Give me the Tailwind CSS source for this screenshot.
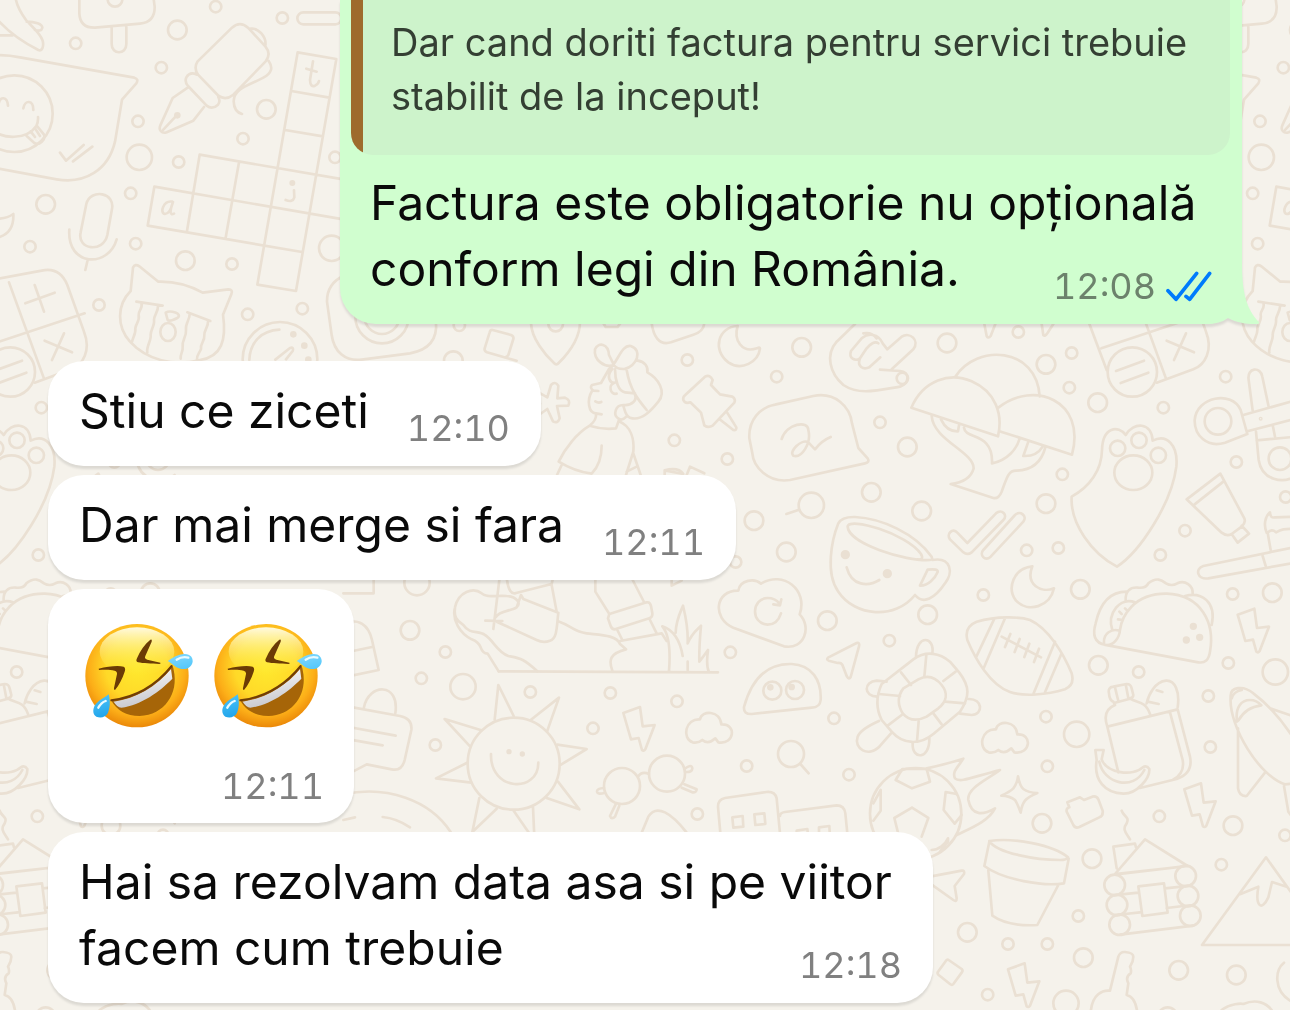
<!doctype html>
<html lang="ro">
  <head>
    <meta charset="UTF-8" />
    <meta name="viewport" content="width=device-width, initial-scale=1.0" />
    <title>Chat</title>
    <script src="https://cdn.jsdelivr.net/npm/@tailwindcss/browser@4"></script>
  </head>
  <body class="bg-[#f5f2eb] font-['Inter',sans-serif] text-[#0a0a0a]">
    <main class="relative isolate min-h-screen overflow-hidden">
      <!-- doodle wallpaper, repeats every 1122px -->
      <svg class="absolute top-0 left-0 -z-10 h-full w-full" aria-hidden="true" fill="none" stroke="#eae0d3" stroke-width="8" stroke-linecap="round" stroke-linejoin="round">
        <defs>
          <g id="tile">
            <g transform="scale(.33333)">
              <!-- bird, ice cream -->
              <path d="M-5 62C30 100 75 130 115 150C127 155 132 138 128 122C120 97 95 80 78 60C60 35 50 15 47-5M80 65C105 65 127 72 127 83C125 93 115 93 105 90M-5 106H38" />
              <path d="M238-10V40Q240 84 285 83L420 71Q465 67 464 20L460-10M335 82V132C335 165 379 165 379 132V80" />
              <circle cx="345" cy="-2" r="22" />
              <!-- speech bubble with face -->
              <path d="M-60 170Q0 160 60 172L403 233Q417 237 409 250L366 299L345 425C325 510 255 553 170 538L-20 503" />
              <circle cx="43" cy="341" r="115" />
              <path d="M-25 385C5 420 80 420 109 378Q115 366 114 351M-5 316C0 285 22 290 24 317M70 325C75 298 100 300 100 330M80 408L103 429C118 438 138 418 132 404L110 377M92 394L105 411M105 385L120 408M180 458L198 482L251 435M219 484L277 440" />
              <!-- fountain pen -->
              <path d="M593 184L696 83Q720 62 744 83L796 139Q815 162 797 184L700 284Q678 302 656 288L594 224Q580 204 593 184ZM590 224Q570 214 559 232Q553 245 564 258L620 317Q637 330 654 314Q662 303 655 291M563 263L518 294L481 376C475 390 485 402 500 397L580 362L612 321M490 389L530 346M752 86C775 83 800 110 796 137M806 183C820 203 815 220 790 233C745 257 702 265 701 304Q702 335 726 342" />
              <circle cx="532" cy="346" r="6" fill="#eae0d3" />
              <rect x="892" y="37" width="132" height="36" rx="18" />
              <!-- crossword -->
              <path d="M893 157L1009 177L888 873L772 854ZM874 273L988 293M855 390L969 409M599 464L1030 538M463 560L1030 658M443 677L906 756M599 464L561 693M463 560L443 677M717 487L677 713M939 184L930 240Q931 263 945 257Q955 252 957 243M919 206L950 215M882 571L883 592Q878 609 857 600M517 605C490 600 478 640 495 642Q510 642 519 606Q503 650 522 641" />
              <circle cx="877" cy="549" r="5" fill="#eae0d3" />
              <!-- microphone -->
              <path d="M259 612C270 565 350 575 335 632L322 705C310 760 230 750 242 697ZM208 689C200 800 325 805 350 718M263 780L256 810M-5 656Q22 655 40 642C42 685 20 705-5 712" />
              <!-- crying cat -->
              <path d="M392 873L399 803Q405 790 418 799L475 845Q545 843 608 878L685 868Q700 868 694 883L669 944C680 1020 665 1070 600 1080C520 1100 440 1080 390 1025C350 980 350 915 392 873Z" />
              <path d="M409 905L488 917M424 910C430 925 415 930 416 945C420 962 408 970 406 985C408 1000 400 1010 396 1025M474 918C475 935 462 945 462 960C465 975 452 990 452 1004C455 1020 438 1040 442 1058M562 937L631 963M569 941C570 960 555 970 558 990C560 1010 545 1020 548 1040C550 1055 540 1062 542 1076M624 963C626 980 612 990 613 1005C615 1025 600 1030 603 1047C598 1060 590 1065 591 1078M497 938C510 930 550 940 532 954C520 960 508 965 503 960Z" />
              <ellipse cx="504" cy="996" rx="23" ry="27" />
              <g>
                <circle cx="647" cy="20" r="17" /><circle cx="847" cy="54" r="17" /><circle cx="227" cy="130" r="17" /><circle cx="484" cy="203" r="17" /><circle cx="414" cy="364" r="17" /><circle cx="536" cy="486" r="17" /><circle cx="729" cy="416" r="17" /><circle cx="392" cy="580" r="17" /><circle cx="407" cy="731" r="17" /><circle cx="90" cy="740" r="17" /><circle cx="297" cy="915" r="17" /><circle cx="696" cy="792" r="17" /><circle cx="743" cy="943" r="17" /><circle cx="907" cy="926" r="17" /><circle cx="1005" cy="472" r="17" />
                <circle cx="532" cy="90" r="28" /><circle cx="799" cy="328" r="28" /><circle cx="137" cy="613" r="28" /><circle cx="556" cy="782" r="28" /><circle cx="418" cy="472" r="38" /><circle cx="995" cy="745" r="38" />
              </g>
            </g>
            <g transform="translate(230 315) scale(.33333)">
              <!-- compass, camera -->
              <circle cx="150" cy="133" r="112" />
              <path d="M148 44C95 47 60 80 58 135M136 134L180 99Q192 95 188 108L168 133" />
              <g fill="#eae0d3"><circle cx="190" cy="58" r="6" /><circle cx="223" cy="92" r="6" /><circle cx="235" cy="134" r="6" /></g>
              <path d="M345-120Q290-95 291-40L305 60C312 110 345 140 395 134L540 115Q625 100 618 20V-60" />
              <circle cx="456" cy="5" r="80" /><circle cx="456" cy="5" r="52" />
              <path d="M788 45L843 60Q852 64 850 72L835 120Q830 129 820 126L771 112Q762 108 764 100L779 52Q781 44 788 45ZM820 126L860 137" />
              <circle cx="688" cy="31" r="17" /><circle cx="670" cy="137" r="28" />
            </g>
            <g transform="translate(535 320) scale(.33333)">
              <!-- map pin -->
              <path d="M-12 10C-10 55 30 105 57 129Q64 137 71 129C105 95 135 50 135 5" />
              <circle cx="62" cy="12" r="22" />
              <path d="M205 10L212 21H248L256 10M350 10C355 45 370 78 408 67L475 44Q505 35 508 10" />
              <!-- girl with bow -->
              <path d="M236 135C210 145 175 120 180 88C190 65 220 70 222 105L236 133C255 105 265 75 287 78C325 90 305 140 268 147C250 148 240 140 236 135ZM236 135L222 147L198 189L171 195Q163 203 175 212L190 213M171 213C155 240 160 280 183 280L200 283M181 244Q190 250 199 246M183 282Q185 300 164 317Q205 330 243 325L252 300M232 147C212 170 225 190 240 188M236 190C220 195 225 225 245 221M240 148C240 180 250 215 270 217L300 220M275 150C285 210 310 240 335 270M308 122C330 125 340 140 337 157C370 175 395 215 370 245C350 270 320 305 285 293C270 288 270 270 265 258M298 220C310 240 290 258 265 255C240 255 235 285 248 294Q260 305 274 290M164 317C125 340 90 385 71 425Q120 455 170 461C190 440 200 410 200 377M252 304C290 320 298 360 295 395L273 465M295 400L317 465M80 435L66 465M275 455L305 440" />
              <!-- flower, push pin, moon -->
              <path d="M-10 205L37 232L48 195Q60 182 70 197L67 235L90 233Q108 240 100 257L66 258L74 295Q68 312 54 304L37 267L-10 300M-10 245L15 251L-10 265" />
              <path d="M510 170Q525 162 533 180L528 195L555 223L592 230Q603 237 598 248L533 317Q520 325 508 316L498 278L466 247Q450 252 445 240Q443 232 450 226ZM553 297L595 330Q605 332 604 322L576 277" />
              <path d="M608 18C550 20 530 90 580 127C620 155 670 125 675 86Q675 80 666 85C620 100 595 60 608 18Z" />
              <!-- hand -->
              <path d="M960 12L905 65C870 105 885 160 925 195C970 225 1020 213 1095 200C1125 190 1125 155 1095 153L1035 149M1070 148L1135 88C1155 60 1125 35 1100 50L1057 88L1043 70M1043 70C1030 40 1000 38 980 55L948 93C940 115 960 125 975 115M1030 70C1020 62 1005 72 995 85L975 115C965 140 985 150 1003 142L1036 112M985 40Q1010 35 1025 55" />
              <!-- bubble with scribble -->
              <path d="M720 254L835 228C900 215 945 260 951 310L970 384L998 415Q1005 427 990 430L765 480C700 490 655 440 652 400L643 355C640 300 675 262 720 254ZM740 357C755 310 820 300 820 330C830 370 800 415 775 407C760 395 800 355 820 367L840 388Q860 362 887 351" />
              <path d="M389 465V451L445 462M455 465L465 440L508 460M389 451Q430 440 445 462" />
              <!-- cup -->
              <path d="M910 610Q920 590 960 591C1040 595 1140 640 1190 710L1192 720C1250 710 1255 760 1230 790C1200 835 1165 855 1140 825C1080 900 960 890 910 815C870 760 890 660 910 610ZM1185 720C1110 725 940 670 938 620C940 590 1115 640 1158 702Q1168 720 1148 719M1178 749Q1210 745 1208 756C1200 775 1180 798 1155 797ZM935 742C950 800 1000 800 1033 780" />
              <circle cx="931" cy="704" r="10" fill="#eae0d3" /><circle cx="1057" cy="761" r="10" fill="#eae0d3" />
              <path d="M754 582L790 570" />
              <g>
                <circle cx="457" cy="120" r="17" /><circle cx="725" cy="170" r="17" /><circle cx="418" cy="361" r="17" /><circle cx="577" cy="417" r="17" /><circle cx="1035" cy="307" r="17" /><circle cx="602" cy="726" r="17" />
                <circle cx="800" cy="82" r="28" /><circle cx="1117" cy="381" r="28" /><circle cx="1009" cy="517" r="28" /><circle cx="657" cy="602" r="28" /><circle cx="754" cy="696" r="28" /><circle cx="829" cy="556" r="38" />
              </g>
            </g>
            <g transform="translate(900 320) scale(.33333)">
              <path d="M253 12L260 48Q265 57 272 48L286 12M425 12L430 45Q435 50 442 40L460 12" />
              <!-- mushrooms -->
              <path d="M34 263C70 180 150 155 215 184C285 215 310 280 294 349ZM166 170C230 70 410 80 419 229M296 262C400 180 560 240 516 404L303 335M95 288C100 360 221 395 221 445Q210 485 152 492L280 534Q295 538 305 515C320 475 325 450 350 452C400 450 425 425 436 382M123 298Q140 335 174 334L177 316M192 323C195 360 280 335 276 430C325 420 350 385 358 358M384 368L370 408Q410 410 428 380" />
              <!-- lunch plate -->
              <path d="M791-148Q845-160 868-105L918 35C940 90 915 135 880 148L770 188M560-105L791-148M560-10L620 150M604 85L920-20M693-113L798 176M800 62L882 97M858 40L822 120M770-105L798-25M742-50L830-82" />
              <circle cx="697" cy="156" r="74" /><path d="M648 153L732 122M662 189L745 158" />
              <!-- paw -->
              <path d="M515 530C570 500 605 450 606 390C608 320 655 315 677 345C700 305 755 305 758 362C800 340 835 375 829 440C815 550 720 695 651 740C575 700 510 610 515 530Z" />
              <circle cx="653" cy="385" r="23" /><circle cx="717" cy="361" r="23" /><circle cx="775" cy="406" r="23" /><ellipse cx="700" cy="458" rx="57" ry="52" />
              <!-- scissors -->
              <path d="M1042 342L975 368C920 385 883 345 884 300C890 230 995 210 1022 270L1042 342M1030 285L1190 240M1042 334L1190 295M1058 272L1046 180C1040 140 1083 140 1087 170L1106 260M1068 335L1076 420C1085 480 1150 495 1190 465M1070 361L1190 350M1118 315L1125 350" />
              <circle cx="954" cy="304" r="40" /><circle cx="1140" cy="416" r="34" /><circle cx="1082" cy="296" r="2" />
              <!-- paint tube, toothbrush -->
              <path d="M961 461L860 538L965 638Q980 650 995 642L1025 620Q1038 608 1033 595ZM970 485L883 554M995 642L1013 668L1047 641L1025 617" />
              <path d="M1190 680L910 738C885 745 890 780 925 775L1190 727M1088 708L1097 738M1112 690L1103 638M1100 638C1090 615 1095 590 1110 577Q1110 595 1125 592L1190 590M1103 638Q1115 625 1128 637Q1140 630 1150 628L1190 625" />
              <!-- check marks, moon -->
              <path d="M172 638L202 669L288 580C305 565 325 585 310 600L215 697Q202 707 190 697L150 658C138 642 158 622 172 638ZM250 690L345 585C360 570 383 588 370 605L272 710C255 725 237 705 250 690Z" />
              <path d="M397 739C340 745 320 805 348 842C385 880 450 860 462 805C425 820 375 795 397 739Z" />
              <g>
                <circle cx="355" cy="36" r="17" /><circle cx="515" cy="99" r="17" /><circle cx="508" cy="203" r="17" /><circle cx="7" cy="175" r="17" /><circle cx="790" cy="263" r="17" /><circle cx="977" cy="170" r="17" /><circle cx="487" cy="463" r="17" /><circle cx="1009" cy="426" r="17" /><circle cx="1157" cy="531" r="17" /><circle cx="855" cy="632" r="17" /><circle cx="380" cy="691" r="17" /><circle cx="475" cy="684" r="17" /><circle cx="781" cy="705" r="17" />
                <circle cx="141" cy="69" r="28" /><circle cx="438" cy="133" r="28" /><circle cx="593" cy="248" r="28" /><circle cx="65" cy="573" r="28" /><circle cx="438" cy="551" r="28" />
              </g>
            </g>
            <g transform="translate(350 570) scale(.33333)">
              <path d="M-20 70H71V20M-20 157Q50 140 66 210L86 300L-20 322M-20 249L66 231" />
              <circle cx="201" cy="38" r="38" />
              <!-- calendar note -->
              <path d="M-20 407L150 438Q188 446 184 480L164 570Q155 605 125 598L50 583L-20 620M42 412C55 340 150 335 136 430M-20 468L137 497M-20 505L98 526" />
              <path d="M-20 673C110 645 240 690 302 786M98 741Q140 745 180 772M-20 750L15 742" />
              <!-- gardener boots -->
              <path d="M446 304L413 251Q398 250 392 232Q385 215 365 208C330 190 305 150 315 112C325 65 370 50 395 70C410 85 440 75 470 78C500 80 515 100 500 112C480 125 450 120 437 142M315 115C310 150 330 155 340 165C360 195 385 180 405 195C430 210 440 245 475 258C510 265 520 265 562 304M430 177L448 30M406 152L457 153M471 30C475 60 485 75 498 69L605 42L610 20M500 112L513 75L520 87L625 128C620 170 622 205 600 212Q580 220 560 210L440 155M605 45L620 125M628 155C660 165 670 185 710 190C750 195 800 195 810 222L828 238C780 250 775 270 787 302M736 30V65L778 132M848 30L882 96M778 132L890 97Q900 95 903 108L907 130Q908 142 898 145L795 178Q785 178 782 168L774 145ZM802 180L817 210M900 150L920 190M810 213L935 190L950 213" />
              <path d="M446 304L1104 307M957 304C962 240 955 190 937 169C970 180 990 210 998 258M977 188C978 150 990 130 999 107C1007 140 1015 170 1013 220C1025 190 1040 180 1053 167C1050 200 1047 230 1048 275Q1060 260 1074 240C1070 270 1070 290 1076 304M1013 275V300M965 30V47L995 32" />
              <!-- sun -->
              <circle cx="491" cy="581" r="138" />
              <path d="M434 449L445 345L491 438M542 450L627 383L591 485M622 524L710 537L633 584M624 635L688 718L590 684M549 712L553 800M491 722L545 800M388 684L367 786L440 716M364 638L258 625L350 579M358 527L284 447L394 481M423 552C420 665 565 670 565 578" />
              <circle cx="477" cy="545" r="4" fill="#eae0d3" /><circle cx="517" cy="552" r="4" fill="#eae0d3" />
              <!-- bolt, glasses -->
              <path id="bolt" d="M870 411L820 429L843 508L866 504L876 540Q881 545 886 538L914 465L878 469Z" />
              <circle cx="816" cy="648" r="54" /><circle cx="951" cy="611" r="54" />
              <path d="M864 620Q875 603 897 612M1003 597Q1025 580 1027 595Q1027 607 1007 606M995 653L1027 667Q1040 668 1040 658L1003 643M762 654Q740 655 741 665Q743 675 765 668M797 703L780 738Q785 750 795 740L808 707M870 800L895 740C920 700 965 730 1010 788" />
              <g>
                <circle cx="180" cy="181" r="28" /><circle cx="339" cy="350" r="38" /><circle cx="286" cy="246" r="17" /><circle cx="214" cy="325" r="17" /><circle cx="541" cy="366" r="17" /><circle cx="256" cy="525" r="17" /><circle cx="729" cy="475" r="17" /><circle cx="781" cy="369" r="17" /><circle cx="981" cy="394" r="17" /><circle cx="1042" cy="732" r="17" />
              </g>
            </g>
            <g transform="translate(700 570) scale(.33333)">
              <!-- cloud with refresh arrow -->
              <path d="M115 62C120 28 165 25 183 41C250 0 325 60 299 133C335 170 315 240 252 229L100 173C35 145 45 60 115 62ZM243 130C235 155 220 164 203 164C150 160 155 85 203 84Q225 84 238 100M220 103L240 106L244 88" />
              <path id="cloud" d="M0 448C5 420 60 420 64 463C110 460 105 525 55 517L46 505Q25 525 7 510Q-5 520-22 517C-55 505-45 445 0 448Z" />
              <path d="M384 263L470 219Q480 217 477 229L452 321Q447 330 441 320L427 284Q423 278 413 279L386 272Q378 268 384 263Z" />
              <!-- eyes -->
              <path d="M132 411C160 310 215 280 275 282C335 285 365 330 362 390Q360 412 335 413L155 432Q130 433 132 411Z" />
              <circle cx="217" cy="362" r="27" /><circle cx="285" cy="360" r="27" /><circle cx="211" cy="352" r="6" fill="#eae0d3" /><circle cx="275" cy="351" r="6" fill="#eae0d3" />
              <circle cx="273" cy="552" r="39" /><path d="M301 582L326 610" />
              <!-- turtle -->
              <path d="M545 342L640 268C680 240 720 250 750 275L778 308C810 350 810 380 780 425L700 492C660 525 610 525 575 485L545 450C525 410 530 375 545 342ZM610 355L655 328C680 315 705 320 725 345C745 370 740 395 715 415L680 440C650 455 625 450 608 430C590 400 595 375 610 355Z" />
              <path d="M679 255L673 320M767 305L730 333M735 395L795 400M700 430L725 463M656 453L651 515M605 435L563 467M537 372L600 378M603 307L633 345M648 260C650 190 705 200 697 250M805 387C850 385 850 435 815 435L780 431M688 505C690 570 635 570 638 520M573 490L540 528C505 565 460 535 473 500C480 480 510 465 537 453M560 335L530 332C490 335 490 380 532 380" />
              <!-- football on fire -->
              <circle cx="647" cy="731" r="137" />
              <path d="M587 630L607 597H680L690 635L636 655ZM737 666L731 720L764 761L785 735M737 666L770 672M636 713L685 744L665 800M636 713L583 744L597 800M542 660L542 722L520 752M542 660L520 700" />
              <path d="M680 595Q730 585 790 566C775 590 755 605 765 625C780 640 820 620 900 600C860 630 800 655 805 690C815 740 850 735 885 715C865 755 810 775 770 795" />
              <path d="M62 800L54 710Q54 688 75 684L200 666Q225 664 230 685L240 790M240 738Q240 728 255 726L410 706Q433 706 436 730L442 790M97 742L128 738L130 770L100 773ZM163 733L193 730L196 762L166 765ZM290 800V782L322 777L325 800M357 800V772L388 768L390 800" />
              <g>
                <circle cx="382" cy="152" r="28" /><circle cx="683" cy="134" r="28" /><circle cx="91" cy="247" r="17" /><circle cx="568" cy="212" r="17" /><circle cx="402" cy="445" r="17" /><circle cx="140" cy="588" r="17" /><circle cx="447" cy="614" r="17" />
              </g>
            </g>
            <g transform="translate(960 570) scale(.33333)">
              <!-- rugby ball -->
              <path d="M50 155C110 138 180 140 210 150C265 175 310 250 335 310Q345 345 315 358C260 375 190 380 150 366C90 345 45 265 22 210Q12 170 50 155ZM102 148L48 262M135 145L70 297M285 215L221 370M304 252L255 367M125 200L243 262M151 192L135 231M179 207L164 246M208 221L193 261M237 236L222 276" />
              <!-- taco -->
              <path d="M438 225C400 220 398 190 407 160C420 100 450 65 500 65M432 224L715 277Q745 282 750 245C765 160 725 75 620 71C520 70 485 140 480 180C478 205 460 227 438 225ZM497 92C495 65 510 50 535 53Q558 55 565 40C590 20 605 30 618 40Q635 50 652 40C675 30 700 45 698 72M525 97C480 80 440 130 457 180M432 218C430 190 455 175 478 182M675 78C725 65 770 95 755 165M478 125L485 132M495 115L502 122M474 148L488 150" />
              <g fill="#eae0d3"><circle cx="700" cy="169" r="7" /><circle cx="679" cy="210" r="7" /><circle cx="719" cy="202" r="7" /></g>
              <use href="#bolt" x="13" y="-295" />
              <use href="#bolt" x="-147" y="229" />
              <use href="#cloud" x="108" y="30" />
              <!-- lunch bag with banana -->
              <path d="M442 470C430 435 440 415 465 405L460 395Q448 390 447 370Q443 352 460 350L500 342Q512 342 515 355L520 375Q520 383 510 385C530 400 555 390 570 432M465 398L510 386M465 352L475 393M497 343L505 384M442 470L653 418M442 470L475 607M653 418L690 560Q700 610 650 627L540 654M630 427L668 570Q675 610 640 628M653 412C660 365 645 330 618 332C585 335 565 375 560 400M590 361L607 366M563 395L596 402" />
              <path d="M406 540H431L425 568C440 610 520 620 548 592Q560 585 568 597C570 625 530 672 490 671C435 670 400 630 410 570ZM418 575C430 640 520 665 553 600" />
              <!-- rocket -->
              <path d="M812 380C810 350 850 345 880 370C940 415 980 470 1010 520M812 380C805 470 900 620 975 643L1010 640M831 455C825 410 845 390 870 390Q890 390 904 406C870 410 850 425 836 450ZM815 385Q820 365 845 360M930 415L1010 442M834 475V655Q838 680 860 678L915 608M972 648L985 725L1010 760" />
              <path d="M174 619Q180 650 190 657Q205 668 232 669Q205 680 195 692Q185 705 182 728Q172 700 165 690Q150 678 124 677Q150 665 160 655Q172 640 174 619ZM322 697L360 682L372 690L397 680Q410 677 415 688L428 722Q430 738 418 742L358 771Q346 776 340 765L320 725Q318 715 328 712ZM485 722C490 740 510 740 500 760C485 780 500 790 510 808" />
              <g>
                <circle cx="70" cy="75" r="17" /><circle cx="818" cy="72" r="17" /><circle cx="805" cy="279" r="17" /><circle cx="536" cy="306" r="17" /><circle cx="745" cy="378" r="17" /><circle cx="258" cy="440" r="17" /><circle cx="751" cy="531" r="17" /><circle cx="262" cy="589" r="17" /><circle cx="598" cy="739" r="17" /><circle cx="975" cy="796" r="17" />
                <circle cx="361" cy="58" r="28" /><circle cx="937" cy="68" r="28" /><circle cx="415" cy="286" r="28" /><circle cx="246" cy="760" r="28" /><circle cx="819" cy="767" r="28" /><circle cx="350" cy="493" r="38" /><circle cx="946" cy="306" r="38" />
              </g>
            </g>
            <g transform="translate(920 760) scale(.33333)">
              <path d="M30 350L125 332Q135 330 132 342L104 378L110 415Q110 427 100 420L30 370M35 270C55 270 75 255 84 235V245L60 275" />
              <!-- plant pot -->
              <path d="M208 243C280 232 400 255 444 292Q440 300 420 300C350 300 230 280 208 243ZM208 245L193 318C250 360 370 380 432 370L446 296M205 332L217 467C250 490 300 498 352 495L415 375" />
              <!-- log cabin -->
              <path d="M585 342L675 238L803 318ZM590 325L580 260L645 251L648 262M600 342L785 320M605 403L655 398M735 385L785 380M615 462L660 457M740 444L790 438M600 524L820 497M655 379L732 370L743 458L667 468Z" />
              <circle cx="584" cy="375" r="31" /><circle cx="591" cy="435" r="31" /><circle cx="599" cy="494" r="31" /><circle cx="797" cy="348" r="31" /><circle cx="804" cy="408" r="31" /><circle cx="811" cy="467" r="31" />
              <!-- mountain -->
              <path d="M1130 555H846L1038 292L1130 420M962 402L1015 380C1005 440 1025 455 1045 412L1056 366L1100 380" />
              <!-- bottle, bolt, note -->
              <path d="M512 760C515 700 550 690 570 692L595 590Q600 575 615 576Q640 578 640 590Q640 605 630 620Q635 630 632 640Q615 650 625 670L620 705C645 710 650 740 652 760M86 600L125 627Q130 632 125 638L100 672Q96 677 90 672L56 645Q50 640 55 634L78 602Q82 597 86 600Z" />
              <use href="#bolt" x="-556" y="199" />
              <path d="M1092 608C1065 630 1060 690 1110 722M905 750C930 730 965 730 970 732C1010 715 1040 730 1055 750" />
              <g>
                <circle cx="904" cy="314" r="17" /><circle cx="475" cy="468" r="17" /><circle cx="264" cy="552" r="17" /><circle cx="382" cy="552" r="17" /><circle cx="203" cy="704" r="17" />
                <circle cx="516" cy="296" r="28" /><circle cx="142" cy="517" r="28" /><circle cx="490" cy="593" r="28" /><circle cx="776" cy="631" r="28" /><circle cx="949" cy="645" r="28" /><circle cx="743" cy="770" r="28" /><circle cx="438" cy="730" r="38" />
              </g>
            </g>
          </g>
        </defs>
        <use href="#tile" />
        <use href="#tile" x="-1122" />
        <use href="#tile" x="1122" />
      </svg>

      <div class="flex flex-col items-start gap-[9px] px-12 pb-[7px]">
        <!-- sent -->
        <article class="relative mb-7 w-fit max-w-[902px] self-end rounded-b-[36px] bg-[#d0fecf] drop-shadow-[0_3px_1px_rgba(0,0,0,0.1)]">
          <blockquote class="mr-3 ml-[11px] flex overflow-hidden rounded-b-[22px] bg-[#cdf3cb]">
            <span class="w-3 shrink-0 bg-[#9e6b2c]"></span>
            <p class="px-7 pt-[15px] pb-8 text-[38px] leading-[54px] text-[#343f33]">Dar cand doriti factura pentru servici trebuie stabilit de la inceput!</p>
          </blockquote>
          <p class="px-[30px] pt-[15px] pb-[22px] text-[48px] leading-[66px]">
            Factura este obligatorie nu opțională conform legi din România.
            <span class="float-right mt-[26px] flex h-12 items-center gap-[10px]">
              <time class="text-[36px] text-[#6c826c] tabular-nums">12:08</time>
              <svg class="h-8 w-[46px]" viewBox="410 416 138 96" fill="none" stroke="#007bfc" stroke-width="11" stroke-linecap="round" stroke-linejoin="round" role="img" aria-label="Citit">
                <path d="M416 478L440 504L502 426M470 495L481 504L541 426" />
              </svg>
            </span>
          </p>
          <svg class="absolute -right-[18px] bottom-0 h-[60px] w-[60px]" viewBox="0 0 60 60" fill="#d0fecf" aria-hidden="true">
            <path d="M42 0C42 30 47 46 59 58Q60 60 56 60C44 60 36 58 28 54Q20 60 6 60H0L26 42Z" />
          </svg>
        </article>

        <!-- received -->
        <article class="w-fit max-w-[885px] rounded-[36px] bg-white drop-shadow-[0_3px_1px_rgba(0,0,0,0.1)]">
          <p class="px-[31px] pt-[17px] pb-[22px] text-[48px] leading-[66px]">
            Stiu ce ziceti
            <time class="float-right mt-[17px] ml-[38px] h-12 text-[36px] text-[#808080] tabular-nums">12:10</time>
          </p>
        </article>
        <article class="w-fit max-w-[885px] rounded-[36px] bg-white drop-shadow-[0_3px_1px_rgba(0,0,0,0.1)]">
          <p class="px-[31px] pt-[17px] pb-[22px] text-[48px] leading-[66px]">
            Dar mai merge si fara
            <time class="float-right mt-[17px] ml-[38px] h-12 text-[36px] text-[#808080] tabular-nums">12:11</time>
          </p>
        </article>
        <article class="flex w-fit flex-col rounded-[36px] bg-white pt-[33px] pr-[30px] pb-1 pl-[35px] drop-shadow-[0_3px_1px_rgba(0,0,0,0.1)]">
          <div class="flex gap-[17px]">
            <svg class="h-[108px] w-28" viewBox="105 96 336 324" role="img" aria-label="🤣">
              <defs>
                <radialGradient id="face" cx=".5" cy=".42" r=".6">
                  <stop offset="0" stop-color="#ffe92e" />
                  <stop offset=".5" stop-color="#ffd928" />
                  <stop offset=".78" stop-color="#fcae18" />
                  <stop offset="1" stop-color="#e88206" />
                </radialGradient>
                <linearGradient id="shine" x2="0" y2="1">
                  <stop stop-color="#fffbe0" />
                  <stop offset="1" stop-color="#ffee3a" stop-opacity="0" />
                </linearGradient>
                <linearGradient id="teeth" x2=".3" y2="1">
                  <stop stop-color="#fff" />
                  <stop offset="1" stop-color="#c9c9ce" />
                </linearGradient>
                <linearGradient id="tear" x2=".4" y2="1">
                  <stop stop-color="#b5ecff" />
                  <stop offset=".55" stop-color="#4fc5fa" />
                  <stop offset="1" stop-color="#139be6" />
                </linearGradient>
                <g id="rofl">
                  <circle cx="267" cy="257" r="155" fill="url(#face)" />
                  <ellipse cx="267" cy="185" rx="112" ry="73" fill="url(#shine)" />
                  <path d="M152 236C180 229 210 226 227 230Q234 234 230 245C223 267 213 285 201 300Q197 300 198 294L207 252Q208 244 200 242C185 238 168 239 153 240ZM307 149Q313 146 311 155L292 198Q288 206 298 209L337 218Q340 221 334 222C310 221 285 220 270 217Q262 214 267 205C276 182 290 163 307 149Z" fill="#6b3b05" />
                  <path d="M190 332C265 322 325 285 370 228Q376 228 377 240C393 310 350 375 275 378C235 378 206 360 190 332Z" fill="#a66508" />
                  <path d="M197 335C265 325 325 290 369 237L373 266C335 305 280 345 220 353Q207 351 197 335Z" fill="url(#teeth)" />
                  <path d="M190 331C265 322 325 285 371 228" fill="none" stroke="#713e05" stroke-width="6" stroke-linecap="round" />
                  <path d="M359 213C375 202 390 194 407 192C426 190 435 202 434 215C431 232 416 239 401 237C384 235 374 221 359 213ZM182 313C187 331 187 352 180 368C173 382 158 385 145 380C132 372 134 353 144 341C156 328 171 323 182 313Z" fill="url(#tear)" />
                  <path d="M386 209Q403 198 421 203M151 353Q160 337 173 333" fill="none" stroke="#e9faff" stroke-width="7" stroke-linecap="round" />
                </g>
              </defs>
              <use href="#rofl" />
            </svg>
            <svg class="h-[108px] w-28" viewBox="105 96 336 324" role="img" aria-label="🤣">
              <use href="#rofl" />
            </svg>
          </div>
          <time class="mt-[23px] self-end text-[36px] leading-[66px] text-[#808080] tabular-nums">12:11</time>
        </article>
        <article class="w-fit max-w-[885px] rounded-[36px] bg-white drop-shadow-[0_3px_1px_rgba(0,0,0,0.1)]">
          <p class="px-[31px] pt-[17px] pb-[22px] text-[48px] leading-[66px]">
            Hai sa rezolvam data asa si pe viitor facem cum trebuie
            <time class="float-right mt-[17px] ml-[38px] h-12 text-[36px] text-[#808080] tabular-nums">12:18</time>
          </p>
        </article>
      </div>
    </main>
  </body>
</html>
